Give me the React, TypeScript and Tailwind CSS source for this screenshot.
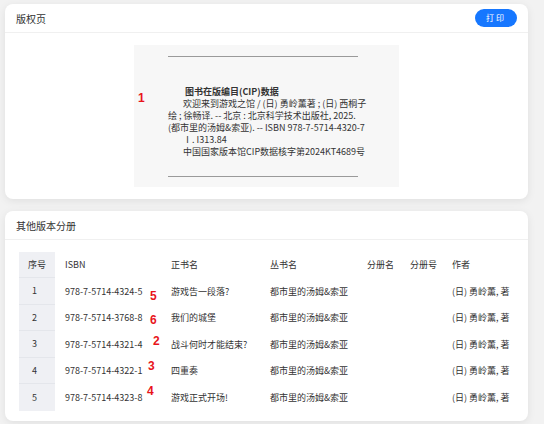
import React from "react";

const font = { fontFamily: '"Noto Sans CJK SC", "Liberation Sans", sans-serif' };

const rows = [
  { no: "1", isbn: "978-7-5714-4324-5", title: "游戏告一段落?", mark: "5", mx: "left-[131px]", my: "top-[12px]" },
  { no: "2", isbn: "978-7-5714-3768-8", title: "我们的城堡", mark: "6", mx: "left-[131px]", my: "top-[9px]" },
  { no: "3", isbn: "978-7-5714-4321-4", title: "战斗何时才能结束?", mark: "2", mx: "left-[134px]", my: "top-[4px]" },
  { no: "4", isbn: "978-7-5714-4322-1", title: "四重奏", mark: "3", mx: "left-[129px]", my: "top-[2px]" },
  { no: "5", isbn: "978-7-5714-4323-8", title: "游戏正式开场!", mark: "4", mx: "left-[128px]", my: "top-[1px]" },
];

const cols = "grid grid-cols-[36px_106px_99px_97px_43px_42px_1fr]";

export default function App() {
  return (
    <div
      className="w-[544px] h-[424px] overflow-hidden bg-[#f2f2f2] pl-[5px] pr-[16px] pt-[4px] flex flex-col gap-[12px] text-[#333]"
      style={font}
    >
      {/* Card 1 */}
      <div className="bg-white rounded-[8px] shadow-[0_2px_8px_rgba(0,0,0,0.08)] flex flex-col">
        <div className="h-[29px] flex items-center justify-between pl-[11px] pr-[11px] border-b border-[#f0f0f0]">
          <span className="text-[10px]">版权页</span>
          <button className="w-[42px] h-[18px] rounded-full bg-[#1677ff] text-white text-[8px] tracking-[2px] flex items-center justify-center">
            打印
          </button>
        </div>
        <div className="flex justify-center pt-[12px] pb-[12px]">
          <div className="relative w-[265px] h-[142px] bg-[#f7f7f7] pt-[11px]">
            <div className="ml-[34px] w-[190px] h-[1px] bg-[#9a9a9a]" />
            <div className="ml-[34px] mt-[29px] text-[9px] leading-[12px] text-[#333] whitespace-nowrap">
              <div className="pl-[17px] font-bold">图书在版编目(CIP)数据</div>
              <div className="pl-[15px]">欢迎来到游戏之馆 / (日) 勇岭薰著 ; (日) 西桐子</div>
              <div>绘 ; 徐畅译. -- 北京 : 北京科学技术出版社, 2025.</div>
              <div>(都市里的汤姆&amp;索亚). -- ISBN 978-7-5714-4320-7</div>
              <div className="pl-[15px]">Ⅰ. I313.84</div>
              <div className="pl-[15px]">中国国家版本馆CIP数据核字第2024KT4689号</div>
            </div>
            <div className="ml-[34px] mt-[18px] w-[190px] h-[1px] bg-[#9a9a9a]" />
            <span
              className="absolute left-[4px] top-[44px] text-[12px] font-bold text-[#e8141b]"
              style={{ fontFamily: '"Liberation Sans", sans-serif' }}
            >
              1
            </span>
          </div>
        </div>
      </div>

      {/* Card 2 */}
      <div className="bg-white rounded-[8px] shadow-[0_2px_8px_rgba(0,0,0,0.08)] flex flex-col h-[210px]">
        <div className="h-[29px] flex items-center pl-[11px] border-b border-[#f0f0f0]">
          <span className="text-[10px]">其他版本分册</span>
        </div>
        <div className="pl-[14px] pr-[14px] pt-[12px] text-[9px]">
          <div className={`${cols} h-[26px] items-center`}>
            <div className="h-full bg-[#eff0f4] flex items-center justify-center border-b border-[#e4e6eb]">序号</div>
            <div className="pl-[10px]">ISBN</div>
            <div className="pl-[10px]">正书名</div>
            <div className="pl-[10px]">丛书名</div>
            <div className="pl-[10px]">分册名</div>
            <div className="pl-[10px]">分册号</div>
            <div className="pl-[10px]">作者</div>
          </div>
          {rows.map((r, i) => (
            <div key={r.no} className={`${cols} relative h-[26.6px] items-center`}>
              <div
                className={`h-full bg-[#eff0f4] flex items-center pl-[13px] ${i < rows.length - 1 ? "border-b border-[#e4e6eb]" : ""}`}
              >
                {r.no}
              </div>
              <div className="pl-[10px] whitespace-nowrap">{r.isbn}</div>
              <div className="pl-[10px] whitespace-nowrap">{r.title}</div>
              <div className="pl-[10px] whitespace-nowrap">都市里的汤姆&amp;索亚</div>
              <div className="pl-[10px]" />
              <div className="pl-[10px]" />
              <div className="pl-[10px] whitespace-nowrap">(日) 勇岭薰, 著</div>
              <span
                className={`absolute ${r.mx} ${r.my} text-[12px] font-bold text-[#e8141b] leading-none`}
                style={{ fontFamily: '"Liberation Sans", sans-serif' }}
              >
                {r.mark}
              </span>
            </div>
          ))}
        </div>
      </div>
    </div>
  );
}
